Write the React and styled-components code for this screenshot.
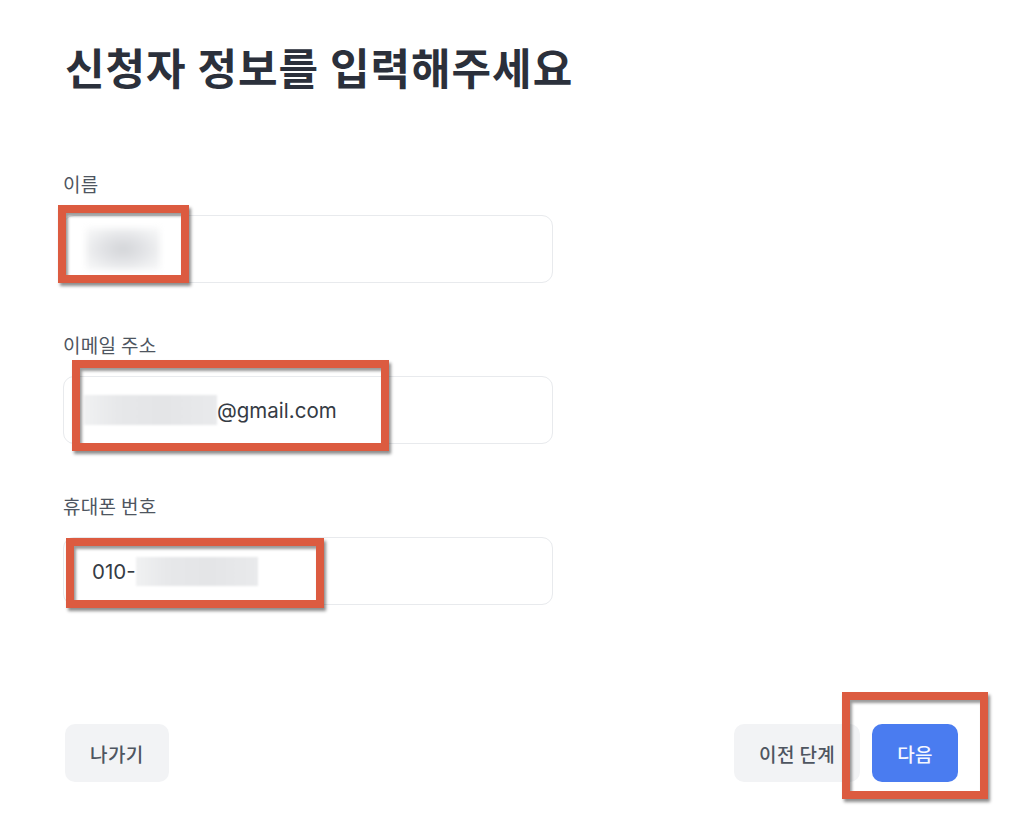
import React from "react";
import styled, { createGlobalStyle } from "styled-components";

const GlobalStyle = createGlobalStyle`
  html, body {
    margin: 0;
    padding: 0;
    background: #ffffff;
  }
  body {
    font-family: "Inter", "Noto Sans CJK KR", sans-serif;
    -webkit-font-smoothing: antialiased;
  }
`;

const Page = styled.div`
  width: 1024px;
  height: 827px;
  box-sizing: border-box;
  padding: 40px 66px 0 63px;
  display: flex;
  flex-direction: column;
  background: #fff;
`;

const Title = styled.h1`
  margin: 0 0 0 2px;
  font-family: "Noto Sans CJK KR", sans-serif;
  font-size: 43px;
  line-height: 52px;
  font-weight: 700;
  color: #2b303b;
  letter-spacing: 1px;
`;

const Form = styled.div`
  display: flex;
  flex-direction: column;
  gap: 50px;
  margin-top: 80px;
`;

const Field = styled.div`
  display: flex;
  flex-direction: column;
  gap: 19px;
`;

const Label = styled.label`
  font-family: "Noto Sans CJK KR", sans-serif;
  font-size: 19px;
  line-height: 24px;
  font-weight: 400;
  letter-spacing: 0.3px;
  color: #4e5560;
`;

const InputBox = styled.div`
  position: relative;
  width: 490px;
  height: 68px;
  box-sizing: border-box;
  border: 1px solid #e8eaed;
  border-radius: 11px;
  display: flex;
  align-items: center;
  padding: 0 20px;
  background: #fff;
`;

const Value = styled.span`
  font-family: "Inter", "Noto Sans CJK KR", sans-serif;
  font-size: 20.5px;
  color: #353b44;
  padding-left: ${(p) => p.$indent || 0}px;
`;

const Blur = styled.span`
  display: inline-block;
  width: ${(p) => p.$w}px;
  height: ${(p) => p.$h}px;
  margin-left: ${(p) => p.$offset || 0}px;
  background: ${(p) =>
    p.$round
      ? "radial-gradient(ellipse at 50% 50%, #d3d5d8 0%, #e2e3e6 40%, #f1f2f3 75%, #f8f8f9 100%)"
      : "linear-gradient(90deg, #f0f1f2 0%, #e7e8ea 25%, #e4e5e7 60%, #e9eaec 100%)"};
  filter: blur(${(p) => (p.$round ? 3 : 1)}px);
`;

const Mark = styled.div`
  position: absolute;
  left: ${(p) => p.$left}px;
  top: ${(p) => p.$top}px;
  width: ${(p) => p.$width}px;
  height: ${(p) => p.$height}px;
  box-sizing: border-box;
  border: 8px solid #dc5b40;
  box-shadow: 2px 3px 3px rgba(0, 0, 0, 0.45),
    inset 2px 3px 3px rgba(0, 0, 0, 0.4);
  pointer-events: none;
  z-index: 2;
`;

const Footer = styled.div`
  display: flex;
  justify-content: space-between;
  align-items: center;
  margin-top: 119px;
  padding-left: 2px;
`;

const ButtonGroup = styled.div`
  display: flex;
  gap: 12px;
`;

const Spot = styled.span`
  position: relative;
  display: inline-flex;
`;

const Button = styled.button`
  height: 58px;
  padding: 0 25px;
  border: none;
  border-radius: 10px;
  font-family: "Noto Sans CJK KR", sans-serif;
  font-size: 19px;
  font-weight: 500;
  letter-spacing: 0.4px;
  cursor: pointer;
  background: ${(p) => (p.$primary ? "#4a7cf0" : "#f2f3f5")};
  color: ${(p) => (p.$primary ? "#f4f7ff" : "#4e5560")};
`;

export default function App() {
  return (
    <>
      <GlobalStyle />
      <Page>
        <Title>신청자 정보를 입력해주세요</Title>
        <Form>
          <Field>
            <Label>이름</Label>
            <InputBox>
              <Blur $round $w={74} $h={42} $offset={2} />
              <Mark $left={-6} $top={-11} $width={131} $height={78} />
            </InputBox>
          </Field>
          <Field>
            <Label>이메일 주소</Label>
            <InputBox>
              <Blur $w={133} $h={30} />
              <Value>@gmail.com</Value>
              <Mark $left={8} $top={-17} $width={317} $height={91} />
            </InputBox>
          </Field>
          <Field>
            <Label>휴대폰 번호</Label>
            <InputBox>
              <Value $indent={8}>010-</Value>
              <Blur $w={122} $h={29} />
              <Mark $left={2} $top={0} $width={258} $height={70} />
            </InputBox>
          </Field>
        </Form>
        <Footer>
          <Button>나가기</Button>
          <ButtonGroup>
            <Button>이전 단계</Button>
            <Spot>
              <Button $primary>다음</Button>
              <Mark $left={-30} $top={-32} $width={146} $height={107} />
            </Spot>
          </ButtonGroup>
        </Footer>
      </Page>
    </>
  );
}
